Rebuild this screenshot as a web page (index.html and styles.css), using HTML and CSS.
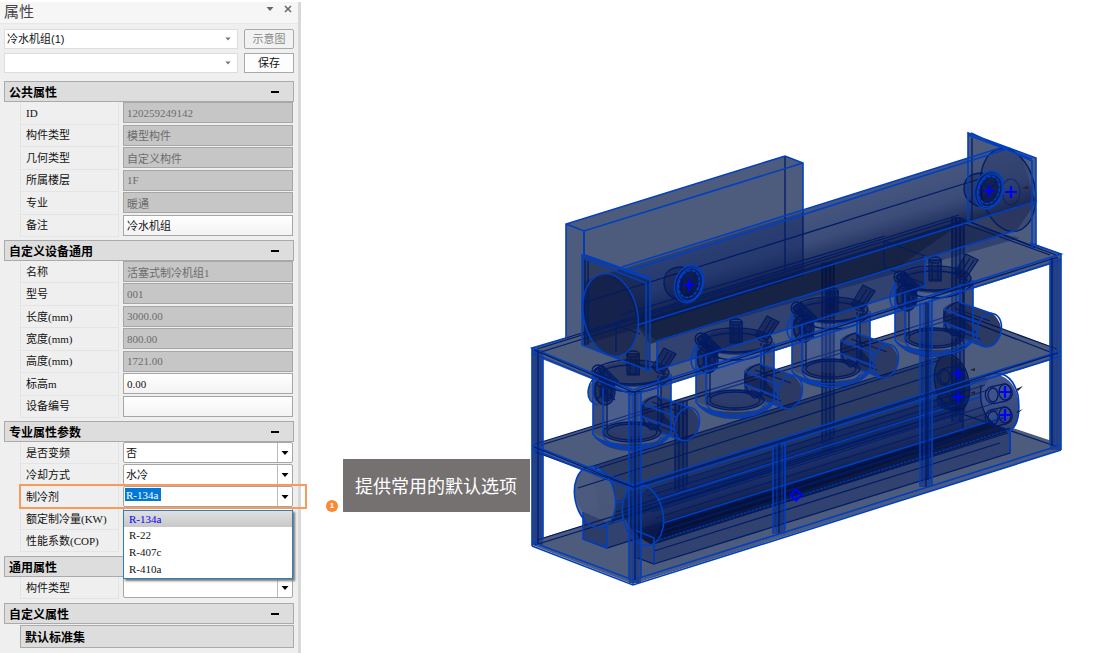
FILE: index.html
```html
<!DOCTYPE html>
<html lang="zh-CN">
<head>
<meta charset="utf-8">
<title>属性</title>
<link rel="stylesheet" href="styles.css">
</head>
<body>
<svg width="0" height="0" class="sprite" aria-hidden="true">
  <symbol id="arrow" viewBox="0 0 8 8"><path d="M0.500 2h7L4 6z" fill="currentColor"/></symbol>
  <symbol id="minus" viewBox="0 0 8 8"><path d="M0 3h8v2H0z" fill="currentColor"/></symbol>
  <symbol id="close" viewBox="0 0 8 8"><path d="M1 1l6 6M7 1l-6 6" stroke="currentColor" stroke-width="1.500"/></symbol>
</svg>
<div class="app">
  <aside class="panel">
    <header class="panel-head">
      <h1>属性</h1>
      <button class="icon-btn" aria-label="菜单"><svg><use href="#arrow"/></svg></button>
      <button class="icon-btn" aria-label="关闭"><svg><use href="#close"/></svg></button>
    </header>
    <div class="toolbar">
      <div class="picker"><select aria-label="构件"><option>冷水机组(1)</option></select><svg><use href="#arrow"/></svg></div>
      <button class="btn btn-off" disabled>示意图</button>
      <div class="picker"><select aria-label="方案"><option></option></select><svg><use href="#arrow"/></svg></div>
      <button class="btn">保存</button>
    </div>

    <section>
      <button class="section-head">公共属性<svg><use href="#minus"/></svg></button>
      <div class="group six">
        <div class="row"><label for="f1">ID</label><input id="f1" value="120259249142" disabled></div>
        <div class="row"><label for="f2">构件类型</label><input id="f2" value="模型构件" disabled></div>
        <div class="row"><label for="f3">几何类型</label><input id="f3" value="自定义构件" disabled></div>
        <div class="row"><label for="f4">所属楼层</label><input id="f4" value="1F" disabled></div>
        <div class="row"><label for="f5">专业</label><input id="f5" value="暖通" disabled></div>
        <div class="row"><label for="f6">备注</label><input id="f6" value="冷水机组"></div>
      </div>
    </section>

    <section>
      <button class="section-head">自定义设备通用<svg><use href="#minus"/></svg></button>
      <div class="group seven">
        <div class="row"><label for="g1">名称</label><input id="g1" value="活塞式制冷机组1" disabled></div>
        <div class="row"><label for="g2">型号</label><input id="g2" value="001" disabled></div>
        <div class="row"><label for="g3">长度(mm)</label><input id="g3" value="3000.00" disabled></div>
        <div class="row"><label for="g4">宽度(mm)</label><input id="g4" value="800.00" disabled></div>
        <div class="row"><label for="g5">高度(mm)</label><input id="g5" value="1721.00" disabled></div>
        <div class="row"><label for="g6">标高m</label><input id="g6" value="0.00"></div>
        <div class="row"><label for="g7">设备编号</label><input id="g7" value=""></div>
      </div>
    </section>

    <section>
      <button class="section-head">专业属性参数<svg><use href="#minus"/></svg></button>
      <div class="group">
        <div class="row"><label for="h1">是否变频</label><div class="combo"><select id="h1"><option>否</option></select><span><svg><use href="#arrow"/></svg></span></div></div>
        <div class="row"><label for="h2">冷却方式</label><div class="combo"><select id="h2"><option>水冷</option></select><span><svg><use href="#arrow"/></svg></span></div></div>
        <div class="row marked"><label for="h3">制冷剂</label><div class="combo"><input id="h3" class="picked" value="R-134a"><span><svg><use href="#arrow"/></svg></span></div>
          <ul class="menu" role="listbox" aria-label="制冷剂">
            <li role="option" aria-selected="true">R-134a</li>
            <li role="option">R-22</li>
            <li role="option">R-407c</li>
            <li role="option">R-410a</li>
          </ul>
        </div>
        <div class="row"><label for="h4">额定制冷量(KW)</label><input id="h4"></div>
        <div class="row"><label for="h5">性能系数(COP)</label><input id="h5"></div>
      </div>
    </section>

    <section>
      <button class="section-head">通用属性<svg><use href="#minus"/></svg></button>
      <div class="group">
        <div class="row"><label for="k1">构件类型</label><div class="combo"><select id="k1"><option></option></select><span><svg><use href="#arrow"/></svg></span></div></div>
      </div>
    </section>

    <section>
      <button class="section-head">自定义属性<svg><use href="#minus"/></svg></button>
      <button class="section-head sub">默认标准集</button>
    </section>
  </aside>

  <main class="stage">
    <div class="note"><span class="num">1</span><p>提供常用的默认选项</p></div>
    <svg class="model" viewBox="530 130 534 458" role="img" aria-label="冷水机组三维模型">
      <defs>
        <linearGradient id="shade" gradientUnits="userSpaceOnUse" x1="780" y1="215" x2="798" y2="275">
          <stop offset="0" stop-color="#0a2a80" stop-opacity=".1"/><stop offset=".55" stop-color="#06206e" stop-opacity=".25"/><stop offset="1" stop-color="#020a2c" stop-opacity=".7"/>
        </linearGradient>
        <linearGradient id="tankshade" gradientUnits="userSpaceOnUse" x1="790" y1="430" x2="808" y2="490">
          <stop offset="0" stop-color="#06206e" stop-opacity=".2"/><stop offset=".5" stop-color="#06206e" stop-opacity=".45"/><stop offset="1" stop-color="#020a2c" stop-opacity=".75"/>
        </linearGradient>
        <path id="top" d="M532 348L959 215 1061 254V261L633 396 532 355z"/>
        <path id="mid" d="M532 445L959 313 1061 350V357L633 490 532 451z"/>
        <path id="low" d="M532 541L959 410 1061 444V450L633 584 532 545z"/>
        <path id="box" d="M566 224L785 156 803 163V276L584 345 566 338z"/>
        <path id="drum" d="M622 268L1000 148 1022 158 1036 202 637 325Q636 290 605 274z"/>
        <path id="endL" d="M582 255L650 280V371L582 345z"/>
        <path id="endR" d="M968 133L1036 158V248L968 221z"/>
        <path id="tank1" d="M590 467L948 355Q967 362 970 395L965 410 603 527Q575 515 575 490 576 470 590 467z"/>
        <path id="tank2" d="M637 485L992 374Q1016 376 1019 405 1019 427 1008 432L652 545Q623 530 622 503 624 488 637 485z"/>
        <path id="base1" d="M583 512L938 398 963 408V435L607 548 583 539z"/>
        <path id="base2" d="M635 530L985 422 1010 432V453L654 564 635 557z"/>
        <path id="posts" d="M532 350h11v195h-11zM629 393h12v190h-12zM1050 258h11v192h-11zM920 303h12v184h-12zM773 445h12v89h-12z"/>
        <path id="backposts" d="M952 217h12v205h-12zM822 262h12v190h-12zM675 400h12v95h-12z"/>
        <path id="pipe" d="M657 396L691 408Q702 418 698 431 693 443 682 441L641 425V403Q647 396 657 396z"/>
        <g id="comp-fill">
          <path d="M593 372Q632 347 671 372V433Q632 463 593 433z"/>
          <use href="#pipe"/>
          <ellipse cx="601" cy="392" rx="13" ry="13"/>
          <path d="M627 354h11v20h-11zM664 349l11 6-10 15-11-6z"/>
        </g>
        <g id="comp">
          <path d="M607 382h50v48q-25 12-50 0z" fill="#4a66b0" fill-opacity=".3"/>
          <g fill="#010c40" fill-opacity=".42">
            <ellipse cx="633" cy="374" rx="37" ry="13"/>
            <ellipse cx="632" cy="432" rx="29" ry="10"/>
            <path d="M593 373h12v64q-8 0-12-5zM661 376h10v57l-10 6z" fill-opacity=".2"/>
            <use href="#pipe"/>
            <ellipse cx="604" cy="391" rx="11" ry="14"/><ellipse cx="606" cy="391" rx="7" ry="10"/>
            <path d="M592 371l9-6 17 16-7 8zM627 354h13v22h-13zM664 348l12 6-12 20-11-6z"/>
            <path d="M641 405l22 9 14 15-36-13z"/>
            <path d="M593 434q10 17 39 17t39-17q-10 10-39 10t-39-10z"/>
          </g>
          <g class="ink">
            <ellipse cx="632" cy="372" rx="37" ry="12"/><ellipse cx="632" cy="375" rx="32" ry="10"/>
            <path d="M595 378q14 14 38 14t38-14M594 371l8-6 16 16-6 8zM598 369l14 16M601 366l13 15M627 354h12v20h-12zM630 356v18M636 356v18M664 348l12 6-12 18-11-6zM668 352l-9 15M672 354l-9 14M652 366q4 9 14 8"/>
            <ellipse cx="633" cy="354" rx="6" ry="3"/><circle cx="598" cy="371" r="6"/><circle cx="598" cy="371" r="3"/>
            <ellipse cx="605" cy="391" rx="10" ry="14"/><ellipse cx="607" cy="391" rx="6" ry="10"/><ellipse cx="608" cy="392" rx="3" ry="6"/><path d="M595 383l20 17M596 400l18-16"/>
            <path d="M607 390v40M658 375v55M661 376v48"/><ellipse cx="632" cy="432" rx="29" ry="10"/><ellipse cx="632" cy="432" rx="25" ry="8"/>
            <path d="M652 402l36 13M648 422l30 11M657 396q-14 3-15 15 0 12 9 19 9-2 12-12 1-14-6-22"/>
          </g>
          <g class="line">
            <path d="M593 376v58q8 12 39 16 30-2 39-16V374M603 388v46M658 378v18M603 435q4 12 29 12 25-1 29-10M598 405q-10-2-10-13 1-9 6-14"/>
            <ellipse cx="687" cy="424" rx="12" ry="17" transform="rotate(16 687 424)"/>
            <path d="M657 396l34 12M642 403l34 14M641 416l34 13M662 433l21 8M609 442v5M618 443v6M645 443v6M596 438l10 7M661 440l9-6"/>
          </g>
        </g>
        <g id="nozzle">
          <ellipse rx="14" ry="19" transform="rotate(18)" fill="#020c38" fill-opacity=".6"/>
          <path d="M-4-17q-21 0-21 18 1 12 16 16z" fill="#020c38" fill-opacity=".3"/>
          <g class="ink"><path d="M-6-17q-20 0-19 17 1 12 16 17"/><ellipse rx="9" ry="13" transform="rotate(18)"/><path d="M-6-9L7 10M7-9L-5 9M10 1l4 4"/></g>
          <g class="line"><ellipse rx="14" ry="19" transform="rotate(18)"/><ellipse cx="1" rx="12" ry="17" transform="rotate(18)"/><ellipse rx="10" ry="14" transform="rotate(18)" stroke-dasharray="4 1"/></g>
        </g>
        <path id="cross" d="M-6 0H6M0-6V6"/>
        <g id="port"><rect x="-20" y="-8" width="27" height="17" rx="8" transform="rotate(-12)"/><ellipse rx="6" ry="8"/><ellipse cx="-12" cy="3" rx="5" ry="7"/></g>
      </defs>

      <g fill="#4d5b7d">
        <use href="#top"/><use href="#mid"/><use href="#low"/><use href="#box"/><use href="#drum"/><use href="#endL"/><use href="#endR"/>
        <use href="#tank1"/><use href="#tank2"/><use href="#base1"/><use href="#base2"/><use href="#posts"/>
        <use href="#comp-fill"/><use href="#comp-fill" x="103" y="-32"/><use href="#comp-fill" x="199" y="-63"/><use href="#comp-fill" x="302" y="-94"/>
      </g>
      <g fill="#071d5c" fill-opacity=".4">
        <use href="#base1"/><use href="#base2"/><use href="#backposts"/>
        <path d="M590 467L948 355Q967 362 970 395L965 410 603 527z" fill="#0b1d48" fill-opacity=".5"/>
        <path d="M584 281L803 212V276L584 345z"/>
        <path d="M657 341L925 256V286L657 370z"/>
        <path d="M637 325L959 222 1020 238 657 341z"/>
        <path d="M532 350h11v195h-11zM629 393h12v190h-12zM1050 258h11v192h-11zM920 303h12v184h-12zM773 445h12v89h-12z"/>
      </g>
      <ellipse cx="595" cy="497" rx="20" ry="31" transform="rotate(-12 595 497)" fill="#4d5b7d" fill-opacity=".9"/>
      <path d="M583 512L607 522V548L583 539z" fill="#2a3a66" fill-opacity=".7"/>
      <use href="#tank2" fill="url(#tankshade)"/>
      <path d="M662 523L1003 417 1005 424 655 540z" fill="#020a2c" fill-opacity=".5"/>
      <path d="M992 374Q1016 376 1019 405 1019 427 1008 432 980 420 980 392z" fill="#4d5f96" fill-opacity=".55"/>

      <g class="ink">
        <path d="M535 545L959 413 1058 447M537 540L959 409M583 539L607 548 963 435V408M607 522L963 408M654 564L1010 453V432M635 557L654 564V538M654 538L1010 428M654 551L1000 443"/>
        <path d="M578 488L940 373M590 467L940 357M592 470L940 360M616 512L965 401"/>
        <path stroke-opacity=".75" d="M643 485L985 378M645 491L985 385M648 496L988 390M652 512L992 404M656 518L998 410M656 527L1004 418M655 533L1004 424M640 530L700 511"/>
        <path d="M654 543L1008 433"/>
        <path d="M535 444L959 313 1057 349M541 445L959 317 1050 352M535 452L633 487"/>
        <path d="M952 217v205M956 217v200M960 217v205M964 219v193M822 263v180M826 263v175M830 263v177M834 263v173M675 402v88M679 402v88M683 402v88M687 400v85"/>
      </g>
      <g class="line">
        <ellipse cx="595" cy="497" rx="20" ry="31" transform="rotate(-12 595 497)"/>
        <ellipse cx="643" cy="515" rx="20" ry="31" transform="rotate(-12 643 515)"/>
        <path d="M985 376Q1010 366 1018 395 1022 425 1008 432M663 523L1003 417M657 500L980 397M583 512V539L607 548M607 522V548M635 530L654 538V564M1010 432V453M616 503l7-2M614 522l10-3"/>
        <path d="M656 541L1008 430" stroke-dasharray="3 1" stroke-opacity=".7"/>
      </g>
      <g class="ink">
        <ellipse cx="952" cy="383" rx="17" ry="29" transform="rotate(-12 952 383)" fill="#020c38" fill-opacity=".4"/><path d="M981 385Q977 420 1006 431"/>
        <use href="#port" x="957" y="374"/><use href="#port" x="957" y="397"/><use href="#port" x="1005" y="392"/><use href="#port" x="1005" y="415"/>
      </g>

      <use href="#comp"/><use href="#comp" x="103" y="-32"/><use href="#comp" x="199" y="-63"/><use href="#comp" x="302" y="-94"/>

      <use href="#drum" fill="url(#shade)"/>
      <path d="M637 326L1036 202 1017 230 650 344z" fill="#020a2c" fill-opacity=".35"/>
      <path d="M650 322L960 224 900 266 650 344z" fill="#020a1c" fill-opacity=".3"/>
      <use href="#endL" fill="#0a1638" fill-opacity=".45"/>
      <ellipse cx="610" cy="315" rx="27" ry="42" transform="rotate(-12 610 315)" fill="#020c38" fill-opacity=".35"/>
      <ellipse cx="1008" cy="190" rx="27" ry="42" transform="rotate(-12 1008 190)" fill="#1c2c5c" fill-opacity=".35"/>
      <g class="ink">
        <ellipse cx="1008" cy="190" rx="27" ry="42" transform="rotate(-12 1008 190)"/>
        <ellipse cx="1011" cy="192" rx="9" ry="13" stroke-opacity=".5"/>
        <path d="M583 303L989 176M785 157V271M584 231V255M803 212V276M537 349L959 218 1056 255M541 352L959 222 1050 255M620 315L885 236M566 338L959 215M650 322L959 224M884 241L925 256M884 241V267M884 267L925 284M616 325V352M616 325L640 334"/>
        <path d="M968 221L1036 248M972 138V221M585 258V346M588 260V345"/>
      </g>
      <path d="M1022 188l6-2v3zM999 195l5 1-2-3zM970 370l5-2v3zM970 393l5-2v3zM1016 389l7-3-5 5zM1016 412l7-3-5 4z" fill="#222"/>
      <use href="#nozzle" x="689" y="284"/><use href="#nozzle" x="989" y="190"/>

      <g class="line">
        <path d="M566 338V224L785 156 803 163V212M566 224L584 231 803 163M584 231V255"/>
        <path d="M622 267L1000 148M625 272L1010 148M637 325L1037 201M657 341L1017 230M657 341V370M925 256V286M657 370L925 286"/>
        <path d="M582 255L650 280V371L582 345zM582 258L646 283V369M585 255L650 278M968 221V133L1036 158V248M971 133L1032 161V248M968 135L1032 159"/>
        <ellipse cx="610.500" cy="315" rx="27" ry="42" transform="rotate(-12 610.500 315)"/>
        <path d="M566 338L532 348 633 390 1061 254 1030 243M532 353L633 395 1061 260"/>
        <path d="M532 445L633 485 1061 351M532 449L633 490 1061 356"/>
        <path d="M532 542L633 580 1061 445M532 546L633 585 1061 450"/>
        <path d="M532 348V546M543 356V540M629 393V580M641 393V578M1050 261V446M1061 254V450M920 303V487M932 299V485M773 446V534M785 442V530"/>
        <path stroke-opacity=".6" d="M536 350V544M540 355V540M633 395V585M637 395V582M1054 260V447M1057 258V449M924 302V487M929 300V485M777 445V533M782 443V532"/>
      </g>
      <g class="ink"><path d="M538 350V544M635 392V580M1052 258V446M926 302V487M779 444V533M534 350L633 392 1058 257M534 447L633 487 1058 353M928 303V480"/></g>
      <g class="mark">
        <use href="#cross" x="689" y="285"/><use href="#cross" x="989" y="191"/><use href="#cross" x="1011" y="192"/>
        <use href="#cross" x="958" y="374"/><use href="#cross" x="958" y="397"/><use href="#cross" x="1005" y="392"/><use href="#cross" x="1005" y="415"/>
        <path d="M796 489.500l5.500 5.500-5.500 5.500-5.500-5.500z"/>
      </g>
    </svg>
  </main>
</div>
</body>
</html>
```

FILE: styles.css
```css
* { box-sizing: border-box; }
body {
  margin: 0;
  background: #fff;
  color: #111;
  font: 11px/16px "Liberation Serif", "Noto Sans CJK SC", serif;
  overflow: hidden;
}
button, input, select { font: inherit; color: inherit; margin: 0; border-radius: 0; }
svg { width: 8px; height: 8px; flex: none; }
.sprite { position: absolute; }
.app { display: flex; align-items: stretch; min-height: 100vh; padding-top: 2px; }

.panel {
  flex: 0 0 301px;
  padding: 0 4px;
  background: #efefef;
  border-right: 3px solid #d8d8d8;
}
.panel-head {
  display: flex;
  align-items: center;
  gap: 2px;
  height: 22px;
  margin: 0 -4px 5px;
  padding: 0 4px;
  background: #f6f6f6;
  border-bottom: 1px solid #e8e8e8;
}
.panel-head h1 {
  flex: 1;
  margin: 0;
  padding-bottom: 4px;
  font: 15px/16px "Noto Sans CJK SC", sans-serif;
  color: #444;
}
.icon-btn {
  display: flex;
  width: 16px;
  height: 16px;
  padding: 0 2px 8px 6px;
  border: 0;
  background: none;
  color: #666;
}
.toolbar {
  display: grid;
  grid-template-columns: 1fr 50px;
  gap: 4px 6px;
  margin-bottom: 8px;
  font-family: "Liberation Sans", "Noto Sans CJK SC", sans-serif;
}
.picker {
  display: flex;
  align-items: center;
  height: 20px;
  padding-right: 6px;
  background: #fff;
  border: 1px solid #ddd;
  color: #777;
}
.picker svg { width: 6px; height: 6px; }
select {
  flex: 1;
  min-width: 0;
  height: 100%;
  padding: 0 2px;
  border: 0;
  background: none;
  appearance: none;
  color: #111;
}
.btn {
  height: 20px;
  padding: 0;
  background: #fdfdfd;
  border: 1px solid #aaa;
}
.btn-off { color: #888; background: #f2f2f2; border-radius: 2px; }

section { margin-bottom: 3px; }
.section-head {
  display: flex;
  align-items: center;
  justify-content: space-between;
  width: 100%;
  height: 21px;
  padding: 0 14px 0 4px;
  background: #ddd;
  border: 1px solid #aaa;
  font: bold 12px/16px "Noto Sans CJK SC", sans-serif;
  color: #000;
}
.sub { width: auto; min-width: calc(100% - 16px); height: 23px; margin: 1px 0 0 16px; }

.group { display: grid; grid-auto-rows: minmax(22px, 1fr); padding-bottom: 1px; }
.six { min-height: 135px; padding: 0; }
.seven { min-height: 157px; padding: 0; }
.row {
  position: relative;
  display: grid;
  grid-template-columns: 103px 1fr;
  margin-left: 16px;
  padding-right: 1px;
}
.row label {
  align-self: stretch;
  display: flex;
  align-items: center;
  margin-right: 4px;
  padding-left: 5px;
  border: solid #e4e4e4;
  border-width: 0 1px 1px;
}
.row > input, .combo {
  min-width: 0;
  width: 100%;
  height: 21px;
  padding: 0 3px;
  background: linear-gradient(#fff, #f3f3f3);
  border: 1px solid #a6a6a6;
}
.row > input:disabled { color: #6c6c6c; background: #c6c6c6; }
.combo { display: flex; align-items: center; padding: 0; border-radius: 2px; background: #fff; }
.combo span {
  display: flex;
  align-items: center;
  justify-content: center;
  width: 15px;
  height: 100%;
  border-left: 1px solid #bbb;
  color: #000;
}
.picked {
  width: 36px;
  height: 13px;
  margin: 0 auto 4px 1px;
  padding: 0 1px;
  border: 0;
  background: #0078d7;
  color: #fff;
}
.marked::after {
  content: "";
  position: absolute;
  inset: -2px -13px -1px -1px;
  border: 2px solid #f9995a;
  pointer-events: none;
  z-index: 3;
}
.menu {
  position: absolute;
  top: 24px;
  left: 103px;
  right: 1px;
  z-index: 2;
  margin: 0;
  padding: 0;
  list-style: none;
  background: #fff;
  border: 1px solid #2a7fc0;
  box-shadow: 2px 2px 2px #777;
  color: #111;
}
.menu li { height: 17px; padding: 0 5px; line-height: 16px; }
.menu li:first-child { height: 16px; background: linear-gradient(#e0e0e0, #c8c8c8); color: #00f; }

.stage { flex: 1; min-width: 0; display: flex; align-items: flex-start; padding-left: 25px; }
.note { display: flex; align-items: flex-end; gap: 5px; flex: none; margin-top: 457px; }
.num {
  width: 12px;
  height: 12px;
  border-radius: 50%;
  background: #f98a35;
  color: #fff;
  font: bold 8px/12px "Liberation Sans", sans-serif;
  text-align: center;
}
.note p {
  margin: 0;
  padding: 14px 13px 15px 12px;
  background: #767171;
  color: #fff;
  font: 18px/24px "Noto Sans CJK SC", sans-serif;
}
.model { flex: 1; width: auto; height: auto; min-width: 0; max-width: 534px; margin-top: 128px; }
.line { fill: none; stroke: #003fc0; stroke-width: 1.6; }
.ink { fill: none; stroke: #001c66; stroke-width: 1.3; }
.mark { fill: none; stroke: #00f; stroke-width: 2.2; }
```
